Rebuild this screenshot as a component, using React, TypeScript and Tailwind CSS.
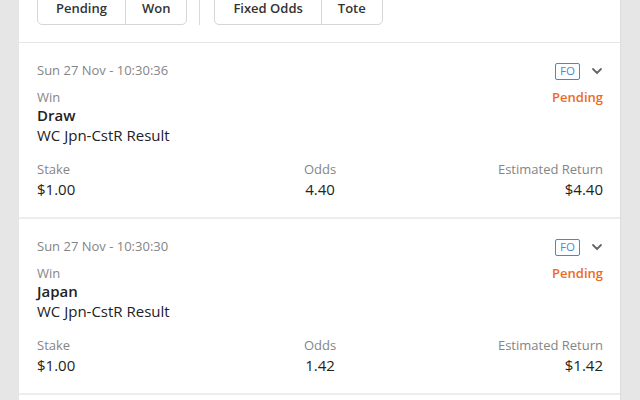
import React from "react";

type Bet = {
  placed: string;
  market: string;
  selection: string;
  event: string;
  stake: string;
  odds: string;
  estReturn: string;
};

const bets: Bet[] = [
  {
    placed: "Sun 27 Nov - 10:30:36",
    market: "Win",
    selection: "Draw",
    event: "WC Jpn-CstR Result",
    stake: "$1.00",
    odds: "4.40",
    estReturn: "$4.40",
  },
  {
    placed: "Sun 27 Nov - 10:30:30",
    market: "Win",
    selection: "Japan",
    event: "WC Jpn-CstR Result",
    stake: "$1.00",
    odds: "1.42",
    estReturn: "$1.42",
  },
];

function ChevronDown() {
  return (
    <svg width="12" height="12" viewBox="0 0 12 12" fill="none">
      <path
        d="M2 4l4 4 4-4"
        stroke="#666"
        strokeWidth="1.8"
        strokeLinecap="round"
        strokeLinejoin="round"
      />
    </svg>
  );
}

function Segmented({ items }: { items: string[] }) {
  return (
    <div className="flex h-[35px] rounded-b-[5px] border border-[#d6d6d6] bg-white">
      {items.map((label, i) => (
        <div
          key={label}
          className={
            i > 0
              ? "flex items-center justify-center border-l border-[#d6d6d6] px-[16px] pt-[2px] text-[13px] font-semibold text-[#333]"
              : "flex items-center justify-center px-[18px] pt-[2px] text-[13px] font-semibold text-[#333]"
          }
        >
          {label}
        </div>
      ))}
    </div>
  );
}

function BetCard({ bet }: { bet: Bet }) {
  return (
    <div className="border-b-2 border-[#ededed] pb-[18px] pl-[18px] pr-[17px] pt-[19px]">
      <div className="flex h-[18px] items-center justify-between">
        <span className="text-[13px] text-[#858585]">{bet.placed}</span>
        <div className="flex items-center gap-[11px]">
          <span className="flex h-[17px] w-[25px] items-center justify-center rounded-[2px] border border-[#3f8bdb] text-[11.5px] leading-none text-[#3f8bdb]">
            FO
          </span>
          <ChevronDown />
        </div>
      </div>
      <div className="mt-[8px] flex items-start justify-between">
        <div className="flex flex-col">
          <span className="text-[13px] leading-[18px] text-[#858585]">
            {bet.market}
          </span>
          <span className="text-[15px] font-semibold leading-[19px] text-[#222]">
            {bet.selection}
          </span>
          <span className="text-[15px] leading-[20px] text-[#222]">
            {bet.event}
          </span>
        </div>
        <span className="text-[13px] font-semibold leading-[18px] text-[#ea6b25]">
          Pending
        </span>
      </div>
      <div className="mt-[15px] grid grid-cols-3">
        <div className="flex flex-col">
          <span className="text-[13px] leading-[18px] text-[#858585]">Stake</span>
          <span className="mt-[1px] text-[15px] leading-[20px] text-[#222]">
            {bet.stake}
          </span>
        </div>
        <div className="flex flex-col items-center">
          <span className="text-[13px] leading-[18px] text-[#858585]">Odds</span>
          <span className="mt-[1px] text-[15px] leading-[20px] text-[#222]">
            {bet.odds}
          </span>
        </div>
        <div className="flex flex-col items-end">
          <span className="text-[13px] leading-[18px] text-[#858585]">
            Estimated Return
          </span>
          <span className="mt-[1px] text-[15px] leading-[20px] text-[#222]">
            {bet.estReturn}
          </span>
        </div>
      </div>
    </div>
  );
}

export default function App() {
  return (
    <div
      className="flex h-[400px] w-[640px] overflow-hidden bg-[#e6e6e6] px-[19px]"
      style={{ fontFamily: '"Open Sans", "Liberation Sans", sans-serif' }}
    >
      <div className="h-full flex-1 border-r border-[#dcdcdc] bg-white">
        <div className="border-b border-[#e6e6e6] pb-[17px] pl-[18px]">
          <div className="-mt-[10px] flex items-start">
            <Segmented items={["Pending", "Won"]} />
            <div className="ml-[12px] mr-[14px] h-[35px] w-[1px] bg-[#d9d9d9]" />
            <Segmented items={["Fixed Odds", "Tote"]} />
          </div>
        </div>
        {bets.map((bet) => (
          <BetCard key={bet.placed} bet={bet} />
        ))}
      </div>
    </div>
  );
}
